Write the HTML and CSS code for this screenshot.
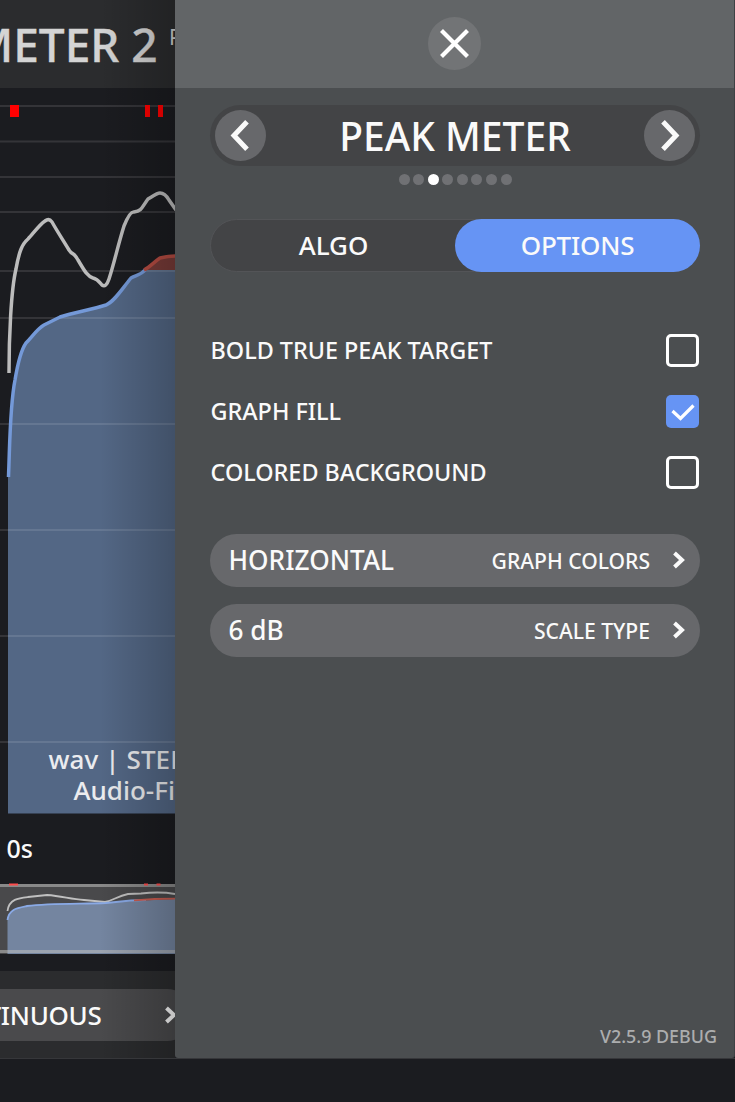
FILE: index.html
```html
<!DOCTYPE html>
<html lang="en">
<head>
<meta charset="utf-8">
<title>Peak Meter Options</title>
<link rel="stylesheet" href="styles.css">
</head>
<body>
<div class="app">
  <main class="stage">
    <header class="stage-header"><span class="title">METER 2</span><span class="edition">PRO</span></header>
    <section class="graph">
      <svg class="plot" width="175" height="726" viewBox="0 88 175 726">
        <path class="fill-blue" d="M8 813.500V475C10 438 10 405 15 380C18 362 21 350 26 343C32 337 37 329 44 325L60 317L76 313L106 305C114 302 122 289 131 278C136 275 141 275 145 270H175V813.500Z"/>
        <path class="fill-red" d="M144 270C150 267 154 262 160 258C164 257 170 256 175 256V270Z"/>
        <path class="grid" d="M0 106H175M0 141.500H175M0 177H175M0 212H175M0 271H175M0 318H175M0 424H175M0 530H175M0 636H175M0 742H175"/>
        <path class="line-blue" d="M8.500 477C10 438 10 405 15 380C18 362 21 350 26 343C32 337 37 329 44 325L60 317C75 312 91 310 106 305C114 302 122 289 131 278C136 275 141 275 145 270"/>
        <path class="line-red" d="M144 270C150 267 154 262 160 258C164 257 170 256 175 256"/>
        <path class="line-grey" d="M9 373C9 338 11 290 16 269C19 252 22 244 28 239C33 234 39 225 45 221Q49 218 52 222C57 231 63 240 69 250C73 256 73 251 78 260C84 270 87 276 93 278C98 279 100 283 102 285Q106 288 109 279C114 264 118 245 124 226Q130 211 134 212C142 211 142 207 148 199C153 196 157 193 160 193Q165 193 169 200L176 210"/>
        <path class="clip" d="M10 105h9v12h-9zM145 105h5v12h-5zM158 105h5v12h-5z"/>
      </svg>
      <div class="file-info"><span class="format">wav | STEREO</span><span class="filename">Audio-File</span></div>
    </section>
    <div class="time-axis">0s</div>
    <svg class="overview" width="175" height="72" viewBox="0 883 175 72">
      <rect class="ov-bg" y="884" width="175" height="70"/>
      <path class="ov-fill" d="M7.500 954V920C9 909 17 908 27 906C50 903 80 904 106 903L131 901L175 899V954Z"/>
      <path class="ov-line" d="M7.500 911C9 899 19 898 28 897L47 895C62 896 70 899 84 900L105 902C113 901 117 896 128 894L141 893.500C154 892 164 892 175 894"/>
      <path class="ov-blue" d="M7.500 920C9 909 17 908 27 906C50 903 80 904 106 903L131 900.500L146 900"/>
      <path class="ov-red" d="M134 900.300L155 899L175 898.700"/>
      <path class="ov-edge" d="M0 885.500H175M0 951.500H175"/>
      <path class="ov-clip" d="M9 883.500h9v2h-9zM144 883.500h4v2h-4zM156.500 883.500h4v2h-4z"/>
    </svg>
    <footer class="stage-footer">
      <div class="mode"><span>CONTINUOUS</span>
        <svg width="14" height="18" viewBox="0 0 14 18"><path d="M2.500 2L10 9L2.500 16"/></svg>
      </div>
    </footer>
    <div class="shade"></div>
  </main>

  <aside class="drawer">
    <div class="drawer-top">
      <button class="close" aria-label="Close"><svg width="53" height="53" viewBox="0 0 53 53"><path d="M13.500 13.500L39.500 39.500M39.500 13.500L13.500 39.500"/></svg></button>
    </div>
    <div class="drawer-body">
      <nav class="pager">
        <button class="round" aria-label="Previous"><svg width="51" height="51" viewBox="0 0 51 51"><path d="M32 11.800L19 25.500L32 39.200"/></svg></button>
        <h1 class="page-name">PEAK METER</h1>
        <button class="round" aria-label="Next"><svg width="51" height="51" viewBox="0 0 51 51"><path d="M19 11.800L32 25.500L19 39.200"/></svg></button>
      </nav>
      <div class="dots"><i></i><i></i><i class="on"></i><i></i><i></i><i></i><i></i><i></i></div>
      <div class="tabs"><span class="tab">ALGO</span><span class="tab active">OPTIONS</span></div>
      <div class="checks">
        <label class="check"><span>BOLD TRUE PEAK TARGET</span><b class="box"></b></label>
        <label class="check"><span>GRAPH FILL</span><b class="box checked"><svg width="33" height="33" viewBox="0 0 33 33"><path d="M6.500 16L14.500 23.500L27.500 10.500"/></svg></b></label>
        <label class="check"><span>COLORED BACKGROUND</span><b class="box"></b></label>
      </div>
      <div class="selects">
        <div class="select"><span class="value">HORIZONTAL</span><span class="name">GRAPH COLORS</span><svg width="14" height="18" viewBox="0 0 14 18"><path d="M2.500 2L10 9L2.500 16"/></svg></div>
        <div class="select"><span class="value">6 dB</span><span class="name">SCALE TYPE</span><svg width="14" height="18" viewBox="0 0 14 18"><path d="M2.500 2L10 9L2.500 16"/></svg></div>
      </div>
      <div class="version">V2.5.9 DEBUG</div>
    </div>
  </aside>
</div>
</body>
</html>
```
FILE: styles.css
```css
* { box-sizing: border-box; }
body {
  margin: 0;
  width: 735px;
  height: 1102px;
  overflow: hidden;
  background: #1b1c20;
  color: #fafafa;
  font-family: "Noto Sans", "Open Sans", sans-serif;
  font-weight: 500;
}
.app {
  display: grid;
  grid-template-columns: 175px 560px;
  height: 1059px;
  border-bottom: 1px solid #36373a;
}
svg { display: block; fill: none; flex: none; }
button { border: 0; padding: 0; border-radius: 50%; }

.stage {
  position: relative;
  overflow: hidden;
  display: flex;
  flex-direction: column;
  height: 1058px;
  white-space: nowrap;
}
.stage-header {
  height: 88px;
  flex: none;
  background: #2b2c2e;
  display: flex;
  align-items: flex-start;
  color: #d4d4d4;
}
.title { font-size: 46px; line-height: 88px; margin-left: -29px; width: 198px; flex: none; -webkit-text-stroke: 0.4px currentColor; }
.edition { font-size: 21px; line-height: 30px; margin-top: 22px; font-weight: 400; }
.graph { height: 726px; flex: none; position: relative; }
.fill-blue { fill: #536785; }
.fill-red { fill: #783b38; }
.grid { stroke: rgba(255, 255, 255, .11); stroke-width: 2; }
.line-blue { stroke: #7499d8; stroke-width: 3.500; }
.line-red { stroke: #b64c42; stroke-width: 3.500; }
.line-grey { stroke: #bcbcbc; stroke-width: 3.500; }
.clip { fill: #f00; }
.file-info {
  position: absolute;
  left: 48.500px;
  top: 656px;
  display: flex;
  flex-direction: column;
  font-size: 26px;
  line-height: 31px;
  color: #ebecef;
}
.format { letter-spacing: 0.1px; }
.filename { margin-left: 25px; }
.time-axis { height: 69px; flex: none; padding-left: 6.500px; font-size: 25px; line-height: 68px; }
.overview { flex: none; }
.ov-bg { fill: #49494b; }
.ov-fill { fill: #7485a0; }
.ov-line { stroke: #c0c0c0; stroke-width: 1.800; }
.ov-blue { stroke: #8aaae6; stroke-width: 1.800; }
.ov-red { stroke: #c95c50; stroke-width: 1.800; }
.ov-edge { stroke: rgba(190, 190, 190, .55); stroke-width: 3; }
.ov-clip { fill: #ff4c4c; }
.stage-footer { height: 87px; margin-top: auto; padding-top: 18px; background: #2b2c2e; }
.mode {
  width: 250px;
  height: 52px;
  margin-left: -57px;
  border-radius: 26px;
  background: #4a4a4c;
  display: flex;
  align-items: center;
  justify-content: flex-end;
  gap: 62.500px;
  padding-right: 15px;
  font-size: 26px;
  letter-spacing: -0.3px;
  line-height: 52px;
}
.mode path, .select path { stroke: #fafafa; stroke-width: 4; }
.shade {
  position: absolute;
  inset: 0 0 0 auto;
  width: 75px;
  background: linear-gradient(90deg, transparent, rgba(0, 0, 0, .22));
}

.drawer {
  height: 1058px;
  display: flex;
  flex-direction: column;
  background: #4b4e50;
  border-right: 1px solid #3e4144;
  border-radius: 0 0 3px 3px;
  overflow: hidden;
}
.drawer-top {
  height: 88px;
  flex: none;
  background: #626567;
  padding: 17px 0 0 253px;
}
.close { width: 53px; height: 53px; background: #727476; }
.close path { stroke: #fff; stroke-width: 4.200; }
.drawer-body { flex: 1; display: flex; flex-direction: column; padding: 17px 17px 8px 35px; }
.pager {
  width: 490px;
  height: 61px;
  border-radius: 31px;
  background: #434446;
  display: flex;
  align-items: center;
  justify-content: space-between;
  padding: 0 5px;
}
.round { width: 51px; height: 51px; background: #67686b; }
.round path { stroke: #fafafa; stroke-width: 5; }
.page-name { margin: 0; font-size: 39px; font-weight: 500; line-height: 60px; }
.dots { display: flex; gap: 3.600px; margin: 8px 0 0 188.500px; height: 11px; }
.dots i { width: 11px; height: 11px; border-radius: 50%; background: #707174; }
.dots .on { background: #fff; }
.tabs {
  width: 490px;
  height: 53px;
  margin-top: 34px;
  border-radius: 27px;
  border: 1px solid #535457;
  background: #434446;
  display: flex;
}
.tab { flex: 1; text-align: center; font-size: 26px; line-height: 51px; }
.active { flex: 0 0 245px; margin: -1px; line-height: 53px; border-radius: 27px; background: #6694f4; letter-spacing: -0.2px; }
.checks { width: 490px; margin-top: 47.500px; padding-left: 0.500px; display: flex; flex-direction: column; }
.check { height: 61.300px; display: flex; align-items: center; justify-content: space-between; font-size: 23.400px; line-height: 34px; padding-right: 1px; }
.check span { margin-top: -1px; }
.box { width: 33px; height: 33px; border: 3px solid #fff; border-radius: 5px; }
.checked { border: 0; background: #6694f4; }
.checked path { stroke: #fff; stroke-width: 3.200; }
.selects { margin-top: 30.300px; display: flex; flex-direction: column; gap: 17px; }
.select {
  width: 490px;
  height: 53px;
  border-radius: 27px;
  background: #67686b;
  display: flex;
  align-items: center;
  padding: 0 14px 0 18.500px;
}
.value { font-size: 26.200px; flex: 1; }
.name { font-size: 21.100px; margin-right: 22px; }
.version { margin-top: auto; align-self: flex-end; color: #acadae; font-size: 17.900px; line-height: 28px; }
```
